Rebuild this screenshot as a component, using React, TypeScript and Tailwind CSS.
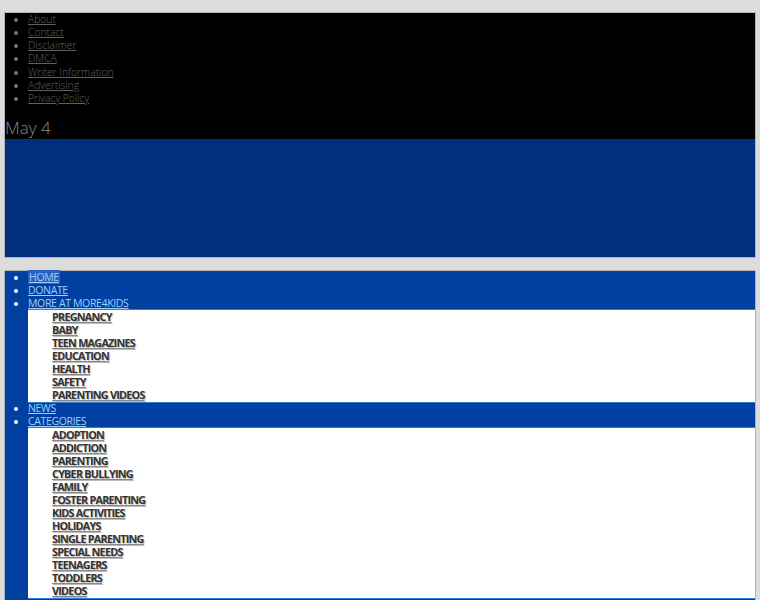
const topLinks = ["About", "Contact", "Disclaimer", "DMCA", "Writer Information", "Advertising", "Privacy Policy"];

const moreLinks = ["Pregnancy", "Baby", "Teen Magazines", "Education", "Health", "Safety", "Parenting Videos"];

const categoryLinks = [
  "Adoption",
  "Addiction",
  "Parenting",
  "Cyber Bullying",
  "Family",
  "Foster Parenting",
  "Kids Activities",
  "Holidays",
  "Single Parenting",
  "Special Needs",
  "Teenagers",
  "Toddlers",
  "Videos",
];

function SubMenu({ items }: { items: string[] }) {
  return (
    <ul className="bg-white shadow-[0_-1px_0_#2f7ad6,0_1px_0_#2f7ad6] list-none pl-6 pb-px">
      {items.map((item) => (
        <li key={item} className="h-[13px] leading-[13px]">
          <a
            href="#"
            className="font-bold uppercase text-[10.8px] tracking-[-0.75px] text-[#333] underline decoration-[#888] [text-shadow:1px_1px_1px_#bbb]"
          >
            {item}
          </a>
        </li>
      ))}
    </ul>
  );
}

export default function App() {
  return (
    <div className="min-h-[600px] bg-[#dcdcdc] px-1 pt-3 font-['Open_Sans',sans-serif] text-[11px]">
      <header className="border border-[#b4b4b4]">
        <div className="bg-black">
          <ul className="list-disc pl-[23px] text-[#626262] marker:text-[#777]">
            {topLinks.map((link) => (
              <li key={link} className="h-[13.17px] leading-[13px] text-[10.3px] font-light">
                <a href="#" className="underline">
                  {link}
                </a>
              </li>
            ))}
          </ul>
          <div className="mt-[12px] h-[22px] text-[17px] font-light leading-[22px] text-[#8a8a8a]">May 4</div>
        </div>
        <div className="h-[118px] bg-[#002f80]" />
      </header>

      <nav className="mt-3 border border-[#b4b4b4] border-b-0 bg-[#0040a0]">
        <ul className="list-disc pl-[23px] uppercase text-[10.5px] tracking-[-0.35px] text-[#9dd0ff] marker:text-white">
          <li className="h-[13px] leading-[13px]">
            <a href="#" className="bg-[#2b62bd] px-px underline">
              Home
            </a>
          </li>
          <li className="h-[13px] leading-[13px]">
            <a href="#" className="underline">
              Donate
            </a>
          </li>
          <li className="leading-[13px]">
            <a href="#" className="underline">
              More at More4Kids
            </a>
            <SubMenu items={moreLinks} />
          </li>
          <li className="h-[13px] leading-[13px]">
            <a href="#" className="underline">
              News
            </a>
          </li>
          <li className="leading-[13px]">
            <a href="#" className="underline">
              Categories
            </a>
            <SubMenu items={categoryLinks} />
          </li>
        </ul>
        <div className="h-4" />
      </nav>
    </div>
  );
}
